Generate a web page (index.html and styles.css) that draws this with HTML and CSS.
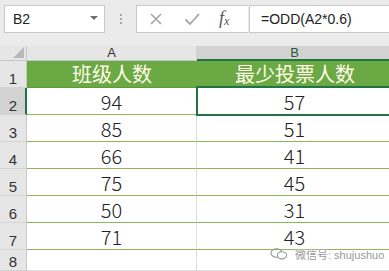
FILE: index.html
```html
<!DOCTYPE html>
<html>
<head>
<meta charset="utf-8">
<link rel="stylesheet" href="styles.css">
</head>
<body>
<div class="toolbar">
  <div class="namebox"><span>B2</span><span class="caret"></span></div>
  <div class="sep"><i></i><i></i><i></i></div>
  <div class="btnbox">
    <svg class="ic" width="14" height="14" viewBox="0 0 14 14"><path d="M2 2L12 12M12 2L2 12" stroke="#a6a6a6" stroke-width="1.6" fill="none"/></svg>
    <svg class="ic" width="16" height="14" viewBox="0 0 16 14"><path d="M1.5 7.5L6 12L15 2" stroke="#a6a6a6" stroke-width="1.8" fill="none"/></svg>
    <span class="fx">f<sub>x</sub></span>
  </div>
  <div class="formula">=ODD(A2*0.6)</div>
</div>
<div class="sheet">
  <div class="corner"><span class="tri"></span></div>
  <div class="colh">A</div>
  <div class="colh sel">B</div>

  <div class="rowh">1</div>
  <div class="cell head">班级人数</div>
  <div class="cell head">最少投票人数</div>

  <div class="rowh sel">2</div>
  <div class="cell">94</div>
  <div class="cell active">57</div>

  <div class="rowh">3</div>
  <div class="cell">85</div>
  <div class="cell">51</div>

  <div class="rowh">4</div>
  <div class="cell">66</div>
  <div class="cell">41</div>

  <div class="rowh">5</div>
  <div class="cell">75</div>
  <div class="cell">45</div>

  <div class="rowh">6</div>
  <div class="cell">50</div>
  <div class="cell">31</div>

  <div class="rowh">7</div>
  <div class="cell">71</div>
  <div class="cell">43</div>

  <div class="rowh last">8</div>
  <div class="cell empty"></div>
  <div class="cell empty"></div>
</div>
<div class="watermark">
  <svg width="18" height="12" viewBox="0 0 18 12"><g fill="none" stroke="#9a9a9a" stroke-width="1.1"><ellipse cx="6.5" cy="5" rx="5.5" ry="4.3"/><ellipse cx="12" cy="7.3" rx="4.6" ry="3.6" fill="#fff"/></g></svg>
  <span>微信号: shujushuo</span>
</div>
</body>
</html>
```
FILE: styles.css
```css
html, body {
  margin: 0;
  padding: 0;
  width: 389px;
  height: 271px;
  overflow: hidden;
  background: #ffffff;
  font-family: "Noto Sans CJK SC", "Liberation Sans", sans-serif;
  position: relative;
}
.toolbar {
  height: 46px;
  background: #ebebeb;
  box-sizing: border-box;
  padding: 5px 0 0 4px;
  display: flex;
  align-items: flex-start;
}
.namebox {
  width: 101px;
  height: 28px;
  box-sizing: border-box;
  background: #fff;
  border: 1px solid #c8c8c8;
  display: flex;
  align-items: center;
  justify-content: space-between;
  padding: 0 6px 0 8px;
  font-family: "Liberation Sans", sans-serif;
  font-size: 14px;
  color: #222;
}
.caret {
  width: 0;
  height: 0;
  border-left: 4px solid transparent;
  border-right: 4px solid transparent;
  border-top: 4px solid #6d6d6d;
  margin-top: -2px;
}
.sep {
  width: 31px;
  height: 28px;
  display: flex;
  flex-direction: column;
  align-items: center;
  justify-content: center;
  gap: 2px;
}
.sep i {
  display: block;
  width: 2px;
  height: 2px;
  background: #a8a8a8;
}
.btnbox {
  width: 112px;
  height: 28px;
  box-sizing: border-box;
  background: #fff;
  border: 1px solid #c8c8c8;
  border-right: none;
  display: flex;
  align-items: center;
  padding-left: 12px;
}
.btnbox .ic:first-child { margin-right: 21px; }
.fx {
  margin-left: 19px;
  font-family: "Liberation Serif", serif;
  font-style: italic;
  font-size: 18px;
  color: #555;
  white-space: nowrap;
  line-height: 18px;
}
.fx sub {
  font-size: 12px;
  vertical-align: -1px;
}
.formula {
  flex: 1;
  height: 28px;
  box-sizing: border-box;
  background: #fff;
  border: 1px solid #c8c8c8;
  border-right: none;
  margin-left: 1px;
  padding-left: 11px;
  display: flex;
  align-items: center;
  font-family: "Liberation Sans", sans-serif;
  font-size: 14px;
  color: #222;
}
.sheet {
  display: grid;
  grid-template-columns: 27px 170px 196px;
  grid-template-rows: 15px repeat(7, 27px) 21px;
}
.corner, .colh, .rowh {
  background: #e6e6e6;
  color: #333;
  box-sizing: border-box;
}
.corner {
  border-right: 1px solid #c6c6c6;
  border-bottom: 1px solid #c6c6c6;
  position: relative;
}
.tri {
  position: absolute;
  right: 2px;
  bottom: 2px;
  width: 0;
  height: 0;
  border-left: 11px solid transparent;
  border-bottom: 11px solid #b9b9b9;
}
.colh {
  border-right: 1px solid #d0d0d0;
  border-bottom: 1px solid #c6c6c6;
  font-family: "Liberation Sans", sans-serif;
  font-size: 13px;
  line-height: 14px;
  text-align: center;
  overflow: hidden;
}
.colh.sel {
  background: #d2d2d2;
  border-bottom: 2px solid #217346;
  color: #1e5c3a;
  line-height: 13px;
}
.rowh {
  border-right: 1px solid #c6c6c6;
  border-bottom: 1px solid #d4d4d4;
  font-family: "Liberation Sans", sans-serif;
  font-size: 15px;
  text-align: center;
  display: flex;
  align-items: flex-end;
  justify-content: center;
  line-height: 17px;
}
.rowh.sel {
  background: #d2d2d2;
  border-right: 2px solid #217346;
  padding-left: 1px;
}
.cell {
  box-sizing: border-box;
  border-bottom: 1px solid #8cb65e;
  border-right: 1px solid #dcdcdc;
  text-align: center;
  font-size: 20px;
  color: #222;
  display: flex;
  align-items: flex-end;
  justify-content: center;
  line-height: 25px;
  font-weight: 300;
}
.cell.head {
  background: #6ba944;
  color: #fffbe8;
  border-bottom: 1px solid #5e9a3a;
  border-right: none;
  font-weight: 400;
  line-height: 27px;
}
.cell.empty {
  border-bottom: 1px solid #dcdcdc;
}
.cell.active {
  position: relative;
}
.cell.active::after {
  content: "";
  position: absolute;
  left: -1px;
  top: -2px;
  right: -4px;
  bottom: -2px;
  border: 2px solid #217346;
}
.watermark {
  position: absolute;
  left: 270px;
  top: 246px;
  display: flex;
  align-items: center;
  gap: 7px;
  font-family: "Liberation Sans", "Noto Sans CJK SC", sans-serif;
  font-size: 11px;
  color: #9a9a9a;
  white-space: nowrap;
  text-shadow: 0 0 2px #fff, 0 0 2px #fff;
}
```
